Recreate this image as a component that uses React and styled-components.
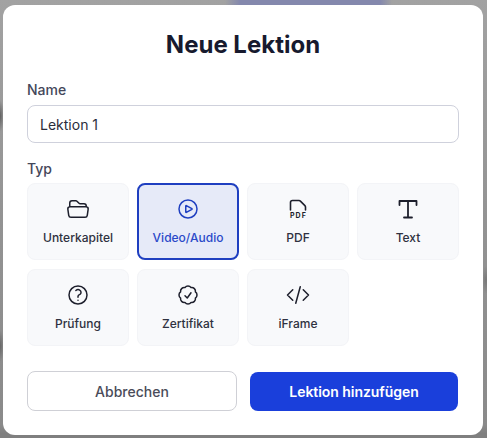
import React from 'react'
import styled, { createGlobalStyle } from 'styled-components'
import {
  HiOutlineFolderOpen,
  HiOutlinePlayCircle,
  HiOutlineQuestionMarkCircle,
  HiOutlineCheckBadge,
  HiOutlineCodeBracket,
} from 'react-icons/hi2'

const GlobalStyle = createGlobalStyle`
  html, body {
    margin: 0;
    padding: 0;
    height: 100%;
  }
  body {
    font-family: Inter, "Liberation Sans", sans-serif;
    background: #8e8e8e;
  }
`

const Overlay = styled.div`
  width: 487px;
  height: 438px;
  box-sizing: border-box;
  padding: 5px 4px 3px 3px;
  background:
    linear-gradient(90deg, transparent 225px, #8488ad 240px, #8488ad 380px, transparent 392px) 0 0 / 100% 5px no-repeat,
    radial-gradient(ellipse 4px 16px at 0 116px, #5f5f5f, transparent),
    radial-gradient(ellipse 4px 16px at 0 346px, #666, transparent),
    radial-gradient(ellipse 4px 14px at 486px 280px, #777, transparent),
    linear-gradient(180deg, #a2a2a2 0, #939393 50%, #8a8a8a 97%, #7f7f7f 99%);
`

const Modal = styled.div`
  height: 430px;
  box-sizing: border-box;
  padding: 24px;
  background: #fff;
  border-radius: 12px;
  display: flex;
  flex-direction: column;
`

const Title = styled.h2`
  margin: 0 0 19px;
  font-size: 24px;
  line-height: 32px;
  font-weight: 700;
  color: #171a2e;
  text-align: center;
`

const Label = styled.div`
  font-size: 14px;
  line-height: 20px;
  font-weight: 450;
  color: #44475a;
  margin-bottom: ${p => p.$gap}px;
`

const NameInput = styled.input`
  box-sizing: border-box;
  width: 100%;
  height: 38px;
  padding: 0 12px;
  border: 1px solid #cfd1dc;
  border-radius: 8px;
  font: 400 14px Inter, sans-serif;
  color: #2b2d3a;
  outline: none;
  margin-bottom: 16px;
`

const TypeGrid = styled.div`
  display: grid;
  grid-template-columns: repeat(4, 102px);
  grid-auto-rows: 77px;
  gap: 9px 8px;
`

const TypeCard = styled.button`
  box-sizing: border-box;
  display: flex;
  flex-direction: column;
  align-items: center;
  justify-content: flex-start;
  gap: 9px;
  padding: ${p => (p.$active ? '12px 0 0' : '13px 0 0')};
  border-radius: 8px;
  border: ${p => (p.$active ? '2px solid #1f3fc0' : '1px solid #f3f4f7')};
  background: ${p => (p.$active ? '#e6eaf8' : '#f8f9fb')};
  color: ${p => (p.$active ? '#2a49c9' : '#2f3140')};
  font-family: inherit;
`

const IconBox = styled.span`
  display: flex;
  height: 24px;
  align-items: center;
  justify-content: center;
  color: ${p => (p.$active ? '#1f3fc0' : '#1d1f2c')};
`

const TypeName = styled.span`
  font-size: 12px;
  line-height: 16px;
  font-weight: 450;
`

const Actions = styled.div`
  display: flex;
  gap: 13px;
  margin-top: auto;
`

const CancelButton = styled.button`
  box-sizing: border-box;
  width: 210px;
  height: 40px;
  border: 1px solid #cfd0d6;
  border-radius: 8px;
  background: #fff;
  color: #4a4c59;
  font: 500 14px Inter, sans-serif;
`

const SubmitButton = styled.button`
  box-sizing: border-box;
  width: 208px;
  height: 39px;
  margin-top: 1px;
  border: none;
  border-radius: 8px;
  background: #1a3fdb;
  color: #fff;
  font: 600 14px Inter, sans-serif;
  letter-spacing: -0.05px;
`

function PdfIcon() {
  return (
    <svg width="24" height="24" viewBox="0 0 24 24" fill="none" stroke="currentColor" strokeWidth="1.6" strokeLinecap="round" strokeLinejoin="round">
      <path d="M4.5 13V5.5a2 2 0 0 1 2-2H13c.5 0 1 .2 1.4.6l4.5 4.5c.4.4.6.9.6 1.4V13" />
      <text x="12.4" y="21" textAnchor="middle" fontFamily="Inter, sans-serif" fontSize="7" fontWeight="700" letterSpacing="1" fill="currentColor" stroke="none">PDF</text>
    </svg>
  )
}

function SerifTIcon() {
  return (
    <svg width="24" height="24" viewBox="0 0 24 24" fill="none" stroke="currentColor" strokeWidth="1.8" strokeLinecap="round" strokeLinejoin="round">
      <path d="M3.5 8V4h17v4M12 4v16.5M8 20.5h8" />
    </svg>
  )
}

const types = [
  { name: 'Unterkapitel', icon: <HiOutlineFolderOpen size={24} /> },
  { name: 'Video/Audio', icon: <HiOutlinePlayCircle size={24} />, active: true },
  { name: 'PDF', icon: <PdfIcon /> },
  { name: 'Text', icon: <SerifTIcon /> },
  { name: 'Prüfung', icon: <HiOutlineQuestionMarkCircle size={24} /> },
  { name: 'Zertifikat', icon: <HiOutlineCheckBadge size={24} /> },
  { name: 'iFrame', icon: <HiOutlineCodeBracket size={24} /> },
]

export default function App() {
  return (
    <Overlay>
      <GlobalStyle />
      <Modal>
        <Title>Neue Lektion</Title>
        <Label $gap={5}>Name</Label>
        <NameInput defaultValue="Lektion 1" />
        <Label $gap={4}>Typ</Label>
        <TypeGrid>
          {types.map(t => (
            <TypeCard key={t.name} $active={t.active}>
              <IconBox $active={t.active}>{t.icon}</IconBox>
              <TypeName>{t.name}</TypeName>
            </TypeCard>
          ))}
        </TypeGrid>
        <Actions>
          <CancelButton>Abbrechen</CancelButton>
          <SubmitButton>Lektion hinzufügen</SubmitButton>
        </Actions>
      </Modal>
    </Overlay>
  )
}
